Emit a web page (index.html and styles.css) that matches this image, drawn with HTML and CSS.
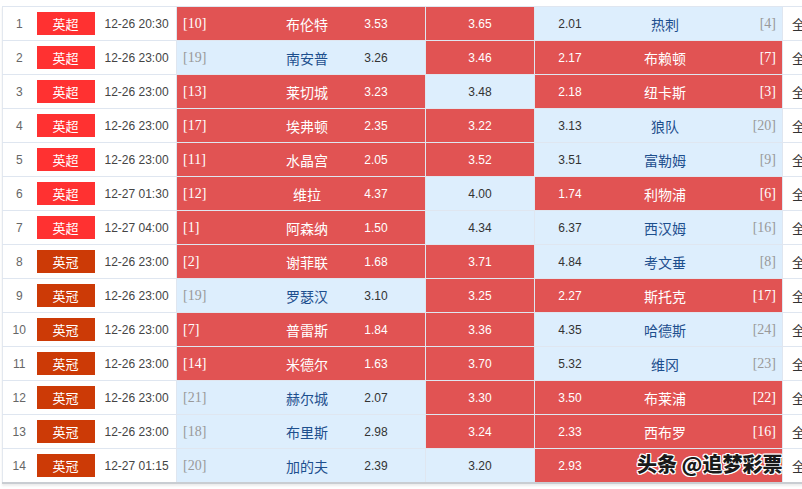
FILE: index.html
```html
<!DOCTYPE html>
<html lang="zh">
<head>
<meta charset="utf-8">
<link rel="stylesheet" href="styles.css">
</head>
<body>
<div class="wrap">
<table class="odds">
<colgroup>
<col class="c-num"><col class="c-lg"><col class="c-time"><col class="c-home"><col class="c-draw"><col class="c-away"><col class="c-more">
</colgroup>
<tbody>
<tr><td class="num">1</td><td><span class="lg epl">英超</span></td><td class="time">12-26 20:30</td>
<td class="home hot"><div class="hc"><span class="rk">[10]</span><span class="tm">布伦特</span><span class="od">3.53</span></div></td>
<td class="draw hot">3.65</td>
<td class="away"><div class="ac"><span class="od">2.01</span><span class="tm">热刺</span><span class="rk">[4]</span></div></td><td class="more">全</td></tr>

<tr><td class="num">2</td><td><span class="lg epl">英超</span></td><td class="time">12-26 23:00</td>
<td class="home"><div class="hc"><span class="rk">[19]</span><span class="tm">南安普</span><span class="od">3.26</span></div></td>
<td class="draw hot">3.46</td>
<td class="away hot"><div class="ac"><span class="od">2.17</span><span class="tm">布赖顿</span><span class="rk">[7]</span></div></td><td class="more">全</td></tr>

<tr><td class="num">3</td><td><span class="lg epl">英超</span></td><td class="time">12-26 23:00</td>
<td class="home hot"><div class="hc"><span class="rk">[13]</span><span class="tm">莱切城</span><span class="od">3.23</span></div></td>
<td class="draw">3.48</td>
<td class="away hot"><div class="ac"><span class="od">2.18</span><span class="tm">纽卡斯</span><span class="rk">[3]</span></div></td><td class="more">全</td></tr>

<tr><td class="num">4</td><td><span class="lg epl">英超</span></td><td class="time">12-26 23:00</td>
<td class="home hot"><div class="hc"><span class="rk">[17]</span><span class="tm">埃弗顿</span><span class="od">2.35</span></div></td>
<td class="draw hot">3.22</td>
<td class="away"><div class="ac"><span class="od">3.13</span><span class="tm">狼队</span><span class="rk">[20]</span></div></td><td class="more">全</td></tr>

<tr><td class="num">5</td><td><span class="lg epl">英超</span></td><td class="time">12-26 23:00</td>
<td class="home hot"><div class="hc"><span class="rk">[11]</span><span class="tm">水晶宫</span><span class="od">2.05</span></div></td>
<td class="draw hot">3.52</td>
<td class="away"><div class="ac"><span class="od">3.51</span><span class="tm">富勒姆</span><span class="rk">[9]</span></div></td><td class="more">全</td></tr>

<tr><td class="num">6</td><td><span class="lg epl">英超</span></td><td class="time">12-27 01:30</td>
<td class="home hot"><div class="hc"><span class="rk">[12]</span><span class="tm">维拉</span><span class="od">4.37</span></div></td>
<td class="draw">4.00</td>
<td class="away hot"><div class="ac"><span class="od">1.74</span><span class="tm">利物浦</span><span class="rk">[6]</span></div></td><td class="more">全</td></tr>

<tr><td class="num">7</td><td><span class="lg epl">英超</span></td><td class="time">12-27 04:00</td>
<td class="home hot"><div class="hc"><span class="rk">[1]</span><span class="tm">阿森纳</span><span class="od">1.50</span></div></td>
<td class="draw">4.34</td>
<td class="away"><div class="ac"><span class="od">6.37</span><span class="tm">西汉姆</span><span class="rk">[16]</span></div></td><td class="more">全</td></tr>

<tr><td class="num">8</td><td><span class="lg efl">英冠</span></td><td class="time">12-26 23:00</td>
<td class="home hot"><div class="hc"><span class="rk">[2]</span><span class="tm">谢菲联</span><span class="od">1.68</span></div></td>
<td class="draw hot">3.71</td>
<td class="away"><div class="ac"><span class="od">4.84</span><span class="tm">考文垂</span><span class="rk">[8]</span></div></td><td class="more">全</td></tr>

<tr><td class="num">9</td><td><span class="lg efl">英冠</span></td><td class="time">12-26 23:00</td>
<td class="home"><div class="hc"><span class="rk">[19]</span><span class="tm">罗瑟汉</span><span class="od">3.10</span></div></td>
<td class="draw hot">3.25</td>
<td class="away hot"><div class="ac"><span class="od">2.27</span><span class="tm">斯托克</span><span class="rk">[17]</span></div></td><td class="more">全</td></tr>

<tr><td class="num">10</td><td><span class="lg efl">英冠</span></td><td class="time">12-26 23:00</td>
<td class="home hot"><div class="hc"><span class="rk">[7]</span><span class="tm">普雷斯</span><span class="od">1.84</span></div></td>
<td class="draw hot">3.36</td>
<td class="away"><div class="ac"><span class="od">4.35</span><span class="tm">哈德斯</span><span class="rk">[24]</span></div></td><td class="more">全</td></tr>

<tr><td class="num">11</td><td><span class="lg efl">英冠</span></td><td class="time">12-26 23:00</td>
<td class="home hot"><div class="hc"><span class="rk">[14]</span><span class="tm">米德尔</span><span class="od">1.63</span></div></td>
<td class="draw hot">3.70</td>
<td class="away"><div class="ac"><span class="od">5.32</span><span class="tm">维冈</span><span class="rk">[23]</span></div></td><td class="more">全</td></tr>

<tr><td class="num">12</td><td><span class="lg efl">英冠</span></td><td class="time">12-26 23:00</td>
<td class="home"><div class="hc"><span class="rk">[21]</span><span class="tm">赫尔城</span><span class="od">2.07</span></div></td>
<td class="draw hot">3.30</td>
<td class="away hot"><div class="ac"><span class="od">3.50</span><span class="tm">布莱浦</span><span class="rk">[22]</span></div></td><td class="more">全</td></tr>

<tr><td class="num">13</td><td><span class="lg efl">英冠</span></td><td class="time">12-26 23:00</td>
<td class="home"><div class="hc"><span class="rk">[18]</span><span class="tm">布里斯</span><span class="od">2.98</span></div></td>
<td class="draw hot">3.24</td>
<td class="away hot"><div class="ac"><span class="od">2.33</span><span class="tm">西布罗</span><span class="rk">[16]</span></div></td><td class="more">全</td></tr>

<tr><td class="num">14</td><td><span class="lg efl">英冠</span></td><td class="time">12-27 01:15</td>
<td class="home"><div class="hc"><span class="rk">[20]</span><span class="tm">加的夫</span><span class="od">2.39</span></div></td>
<td class="draw">3.20</td>
<td class="away hot"><div class="ac"><span class="od">2.93</span><span class="tm"></span><span class="rk"></span></div></td><td class="more">全</td></tr>
</tbody>
</table>
<div class="mark">头条 @追梦彩票</div>
</div>
</body>
</html>
```

FILE: styles.css
```css
html, body {
  margin: 0;
  padding: 0;
  background: #ffffff;
}
body {
  font-family: "Liberation Sans", "Noto Sans CJK SC", sans-serif;
  font-size: 12px;
  color: #555;
  overflow: hidden;
}
.wrap {
  position: relative;
  width: 802px;
  height: 489px;
  overflow: hidden;
  padding-top: 6px;
  padding-left: 2px;
  box-sizing: border-box;
}
.odds {
  border-collapse: collapse;
  table-layout: fixed;
  width: 830px;
  border-bottom: 2px solid #c9cdd2;
  box-shadow: 0 2px 2px rgba(0,0,0,0.08);
}
.c-num { width: 33px; }
.c-lg { width: 66px; }
.c-time { width: 75px; }
.c-home { width: 249px; }
.c-draw { width: 109px; }
.c-away { width: 248px; }
.c-more { width: 50px; }

.odds td {
  height: 33px;
  padding: 0;
  border-top: 1px solid #dfe6f0;
  border-bottom: 1px solid #dfe6f0;
  vertical-align: middle;
  white-space: nowrap;
  overflow: hidden;
}
.odds td:first-child { border-left: 1px solid #e3e8ef; }
.num {
  text-align: center;
  color: #666;
  font-size: 12px;
}
.lg {
  display: flex;
  align-items: center;
  justify-content: center;
  width: 58px;
  height: 23px;
  margin-left: 1px;
  color: #fff;
  font-family: "Noto Sans CJK SC", sans-serif;
  font-size: 13px;
}
.epl { background: #ff3131; }
.efl { background: #cc3a06; }
.time {
  color: #444;
  padding-left: 3px !important;
  font-size: 12px;
}
.home, .draw, .away {
  background: #ddeefd;
  border-left: 1px solid #dfe6f0;
  border-right: 1px solid #dfe6f0;
}
.hot {
  background: #e15353;
}
.hc {
  display: grid;
  grid-template-columns: 96px 68px 10px 50px 1fr;
  align-items: center;
}
.hc .rk { padding-left: 6px; }
.hc .tm { text-align: center; }
.hc .od { text-align: center; grid-column: 4; }
.ac {
  display: grid;
  grid-template-columns: 70px 120px 1fr;
  align-items: center;
}
.ac .od { text-align: center; }
.ac .tm { text-align: center; }
.ac .rk { text-align: right; padding-right: 6px; }
.rk {
  font-family: "Liberation Serif", serif;
  font-size: 14px;
  color: #999;
}
.tm {
  font-family: "Noto Sans CJK SC", sans-serif;
  font-size: 14px;
  color: #1d4f8e;
}
.od {
  color: #333;
  font-size: 12px;
}
.draw {
  text-align: center;
  color: #333;
}
.hot .rk, .hot .tm, .hot .od, .draw.hot {
  color: #ffffff;
}
.more {
  padding-left: 9px !important;
  font-family: "Noto Sans CJK SC", sans-serif;
  font-size: 13px;
  color: #333;
}
.mark {
  position: absolute;
  left: 637px;
  top: 449px;
  font-family: "Noto Sans CJK SC", sans-serif;
  font-weight: 900;
  font-size: 20px;
  color: #1a1a1a;
  text-shadow: 1px 1px 0 #fff, -1px -1px 0 #fff, 1px -1px 0 #fff, -1px 1px 0 #fff, 0 1px 0 #fff, 1px 0 0 #fff, 0 -1px 0 #fff, -1px 0 0 #fff;
}
```
